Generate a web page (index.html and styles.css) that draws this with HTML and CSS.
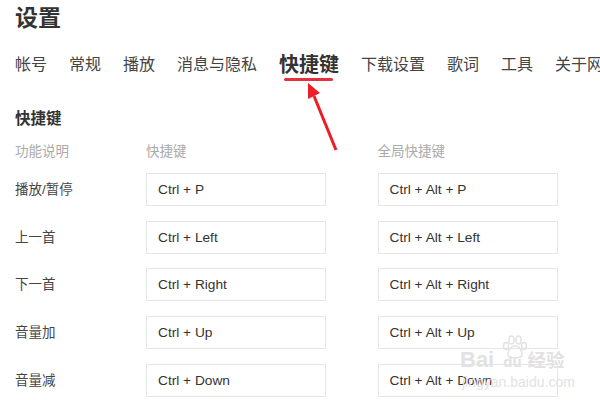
FILE: index.html
```html
<!DOCTYPE html>
<html lang="zh-CN">
<head>
  <meta charset="UTF-8">
  <title>设置</title>
  <link rel="stylesheet" href="styles.css">
</head>
<body>
  <div class="settings">
    <h1 class="settings-title">设置</h1>

    <div class="tabs">
      <span class="tab">帐号</span>
      <span class="tab">常规</span>
      <span class="tab">播放</span>
      <span class="tab">消息与隐私</span>
      <span class="tab active">快捷键</span>
      <span class="tab">下载设置</span>
      <span class="tab">歌词</span>
      <span class="tab">工具</span>
      <span class="tab">关于网</span>
    </div>

    <h2 class="section-title">快捷键</h2>

    <div class="keys">
      <div class="keys-head">功能说明</div>
      <div class="keys-head">快捷键</div>
      <div class="keys-head global">全局快捷键</div>

      <div class="keys-name">播放/暂停</div>
      <div class="key-box">Ctrl + P</div>
      <div class="key-box global">Ctrl + Alt + P</div>

      <div class="keys-name">上一首</div>
      <div class="key-box">Ctrl + Left</div>
      <div class="key-box global">Ctrl + Alt + Left</div>

      <div class="keys-name">下一首</div>
      <div class="key-box">Ctrl + Right</div>
      <div class="key-box global">Ctrl + Alt + Right</div>

      <div class="keys-name">音量加</div>
      <div class="key-box">Ctrl + Up</div>
      <div class="key-box global">Ctrl + Alt + Up</div>

      <div class="keys-name">音量减</div>
      <div class="key-box">Ctrl + Down</div>
      <div class="key-box global">Ctrl + Alt + Down</div>
    </div>
  </div>

  <!-- 标注箭头 -->
  <svg class="arrow" width="60" height="80" viewBox="0 0 60 80">
    <line x1="56" y1="68" x2="34" y2="14" stroke="#ee1c25" stroke-width="3"/>
    <polygon points="28,1 28,17 40,11" fill="#ee1c25"/>
  </svg>

  <!-- 水印 -->
  <div class="watermark">
    <svg class="watermark-paw" width="26" height="24" viewBox="0 0 26 24">
      <g fill="none" stroke="#e2e2e2" stroke-width="1.5">
        <ellipse cx="4" cy="11" rx="2.5" ry="3.5"/>
        <ellipse cx="9.5" cy="5" rx="2.5" ry="4"/>
        <ellipse cx="16.5" cy="5" rx="2.5" ry="4"/>
        <ellipse cx="22" cy="11" rx="2.5" ry="3.5"/>
        <path d="M13 11c-4 0-7 4-7 8 0 3 3 4 7 4s7-1 7-4c0-4-3-8-7-8z"/>
      </g>
    </svg>
    <div class="watermark-logo"><span>Bai</span><span class="watermark-du">du</span><span class="watermark-cn">经验</span></div>
    <div class="watermark-url">jingyan.baidu.com</div>
  </div>
</body>
</html>
```
FILE: styles.css
```css
* {
  margin: 0;
  padding: 0;
  box-sizing: border-box;
}

body {
  width: 600px;
  height: 400px;
  overflow: hidden;
  position: relative;
  background: #fff;
  color: #333;
  font-family: "Liberation Sans", "Noto Sans CJK SC", sans-serif;
}

.settings {
  padding: 3px 0 0 15px;
}

.settings-title {
  font-size: 23px;
  line-height: 30px;
  font-weight: 700;
  color: #333;
}

.tabs {
  display: flex;
  align-items: center;
  gap: 22px;
  height: 30px;
  margin-top: 15px;
  white-space: nowrap;
}

.tab {
  font-size: 16px;
  color: #444;
}

.tab.active {
  position: relative;
  font-size: 20px;
  font-weight: 700;
  color: #333;
}

.tab.active::after {
  content: "";
  position: absolute;
  left: 5px;
  right: 6px;
  bottom: -3px;
  height: 3px;
  border-radius: 2px;
  background: #e8303a;
}

.section-title {
  margin-top: 30px;
  font-size: 15.5px;
  line-height: 22px;
  font-weight: 700;
  color: #333;
}

.keys {
  display: grid;
  grid-template-columns: 131px 180px 232px;
  margin-top: 12px;
}

.keys-head {
  font-size: 13.5px;
  line-height: 20px;
  height: 31px;
  color: #aaa;
}

.keys-name {
  font-size: 13.5px;
  line-height: 33px;
  height: 47.7px;
  color: #444;
}

.key-box {
  height: 33px;
  line-height: 31px;
  padding-left: 11px;
  border: 1px solid #e6e6e6;
  font-size: 13.7px;
  color: #333;
}

.global {
  margin-left: 51.5px;
}

.key-box.global {
  width: 180.5px;
}

.arrow {
  position: absolute;
  left: 280px;
  top: 82px;
}

.watermark {
  position: absolute;
  left: 458px;
  top: 334px;
  width: 110px;
  height: 66px;
  color: #e2e2e2;
}

.watermark-paw {
  position: absolute;
  left: 44px;
  top: 1px;
}

.watermark-logo {
  position: absolute;
  left: 2px;
  top: 12px;
  display: flex;
  align-items: baseline;
  font-size: 22px;
  font-weight: 700;
  white-space: nowrap;
}

.watermark-du {
  margin-left: 9px;
  font-size: 15px;
}

.watermark-cn {
  margin-left: 6px;
  font-size: 18.5px;
}

.watermark-url {
  position: absolute;
  left: 4px;
  top: 40px;
  font-size: 14px;
  white-space: nowrap;
}
```
